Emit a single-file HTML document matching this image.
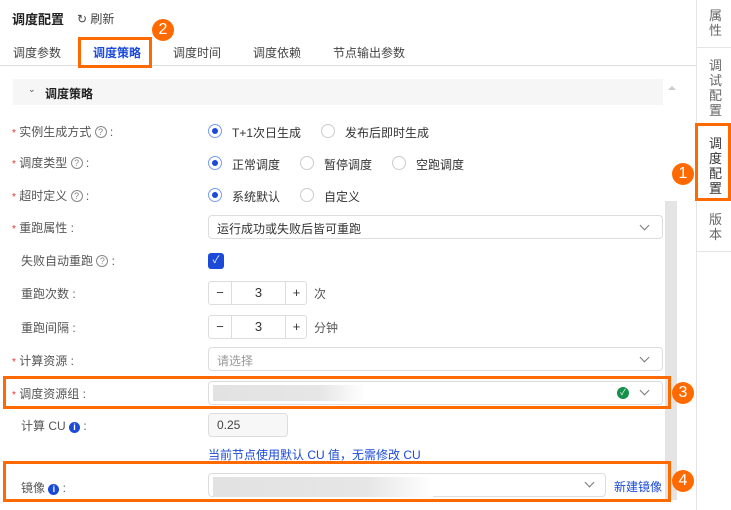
<!DOCTYPE html>
<html><head><meta charset="utf-8"><style>
*{box-sizing:border-box;margin:0;padding:0}
body{width:731px;height:510px;overflow:hidden;background:#fff;font-family:"Liberation Sans","Noto Sans CJK SC",sans-serif;font-size:12px;color:#333;position:relative}
.a{position:absolute;white-space:nowrap}
.lbl{color:#555}
.star{color:#e3342f;font-size:10px}
.radio{position:absolute;width:14px;height:14px;border:1px solid #ccc;border-radius:50%;background:#fff}
.radio.on{border-color:#7a9bf0}
.radio.on::after{content:"";position:absolute;left:3px;top:3px;width:6px;height:6px;border-radius:50%;background:#1b4ad8}
.sel{position:absolute;border:1px solid #ddd;border-radius:4px;background:#fff;height:24px}
.chev{position:absolute;width:7px;height:7px;border-right:1.5px solid #777;border-bottom:1.5px solid #777;transform:rotate(45deg)}
.ob{position:absolute;border:3px solid #ff6a00}
.num{position:absolute;width:22px;height:22px;border-radius:50%;background:#ff6a00;color:#fff;font-size:16px;text-align:center;line-height:22px}
.help{display:inline-block;width:12px;height:12px;border:1px solid #888;border-radius:50%;font-size:9px;line-height:10px;text-align:center;color:#888;vertical-align:1px}
.info{display:inline-block;width:11px;height:11px;border-radius:50%;background:#1b4ad8;color:#fff;font-size:9px;line-height:11px;text-align:center;font-weight:bold;vertical-align:0}
.step{position:absolute;width:99px;height:24px;border:1px solid #ddd;border-radius:3px}
.step span{position:absolute;top:0;height:22px;line-height:22px;text-align:center;font-size:13px;color:#333}
.grad{position:absolute;background:linear-gradient(90deg,#e2e2e2,#e6e6e6 70%,#fff)}
</style></head><body>
<div class="a" style="left:12px;top:9px;font-size:13px;font-weight:bold;color:#222">调度配置</div>
<div class="a" style="left:77px;top:10px;color:#444">&#8635; 刷新</div>
<div class="a" style="left:13px;top:44px;color:#444">调度参数</div>
<div class="a" style="left:93px;top:44px;color:#1b4ad8;font-weight:bold">调度策略</div>
<div class="a" style="left:173px;top:44px;color:#444">调度时间</div>
<div class="a" style="left:253px;top:44px;color:#444">调度依赖</div>
<div class="a" style="left:333px;top:44px;color:#444">节点输出参数</div>
<div class="a" style="left:0;top:65px;width:696px;height:1px;background:#ddd"></div>
<div class="ob" style="left:78px;top:37px;width:74px;height:31px"></div>
<div class="num" style="left:152px;top:19px">2</div>
<div class="a" style="left:13px;top:79px;width:650px;height:26px;background:#f6f6f6"></div>
<div class="a" style="left:28px;top:84px;font-size:9px;color:#555">&#8964;</div>
<div class="a" style="left:45px;top:85px;font-weight:bold;color:#222">调度策略</div>
<div class="a" style="left:668px;top:86px;width:0;height:0;border-left:4px solid transparent;border-right:4px solid transparent;border-bottom:4px solid #ccc"></div>
<div class="a" style="left:665px;top:201px;width:12px;height:299px;background:#e4e4e4"></div>

<div class="a lbl" style="left:12px;top:123px"><span class="star">*</span> 实例生成方式 <span class="help">?</span> :</div>
<div class="radio on" style="left:208px;top:124px"></div><div class="a" style="left:232px;top:124px">T+1次日生成</div>
<div class="radio" style="left:321px;top:124px"></div><div class="a" style="left:345px;top:124px">发布后即时生成</div>

<div class="a lbl" style="left:12px;top:154px"><span class="star">*</span> 调度类型 <span class="help">?</span> :</div>
<div class="radio on" style="left:208px;top:156px"></div><div class="a" style="left:232px;top:156px">正常调度</div>
<div class="radio" style="left:300px;top:156px"></div><div class="a" style="left:324px;top:156px">暂停调度</div>
<div class="radio" style="left:392px;top:156px"></div><div class="a" style="left:416px;top:156px">空跑调度</div>

<div class="a lbl" style="left:12px;top:187px"><span class="star">*</span> 超时定义 <span class="help">?</span> :</div>
<div class="radio on" style="left:208px;top:188px"></div><div class="a" style="left:232px;top:188px">系统默认</div>
<div class="radio" style="left:300px;top:188px"></div><div class="a" style="left:324px;top:188px">自定义</div>

<div class="a lbl" style="left:12px;top:219px"><span class="star">*</span> 重跑属性 :</div>
<div class="sel" style="left:208px;top:215px;width:455px"></div>
<div class="a" style="left:217px;top:220px">运行成功或失败后皆可重跑</div>
<div class="chev" style="left:641px;top:222px"></div>

<div class="a lbl" style="left:21px;top:252px">失败自动重跑 <span class="help">?</span> :</div>
<div class="a" style="left:208px;top:253px;width:16px;height:16px;border-radius:3px;background:#1b4ad8;color:#fff;font-size:10px;text-align:center;line-height:16px">&#10003;</div>

<div class="a lbl" style="left:21px;top:285px">重跑次数 :</div>
<div class="step" style="left:208px;top:281px"><span style="left:0;width:23px;border-right:1px solid #ddd">&minus;</span><span style="left:23px;width:53px">3</span><span style="left:76px;width:22px;border-left:1px solid #ddd">+</span></div>
<div class="a" style="left:314px;top:285px;color:#555">次</div>

<div class="a lbl" style="left:21px;top:319px">重跑间隔 :</div>
<div class="step" style="left:208px;top:315px"><span style="left:0;width:23px;border-right:1px solid #ddd">&minus;</span><span style="left:23px;width:53px">3</span><span style="left:76px;width:22px;border-left:1px solid #ddd">+</span></div>
<div class="a" style="left:314px;top:319px;color:#555">分钟</div>

<div class="a lbl" style="left:12px;top:352px"><span class="star">*</span> 计算资源 :</div>
<div class="sel" style="left:208px;top:347px;width:455px"></div>
<div class="a" style="left:217px;top:352px;color:#999">请选择</div>
<div class="chev" style="left:641px;top:354px"></div>

<div class="a lbl" style="left:12px;top:385px"><span class="star">*</span> 调度资源组 :</div>
<div class="sel" style="left:208px;top:381px;width:455px"></div>
<div class="grad" style="left:213px;top:385px;width:152px;height:16px"></div>
<div class="a" style="left:617px;top:387px;width:12px;height:12px;border-radius:50%;background:#14904a;color:#fff;font-size:8px;text-align:center;line-height:12px">&#10003;</div>
<div class="chev" style="left:641px;top:387px"></div>
<div class="ob" style="left:3px;top:376px;width:668px;height:33px"></div>
<div class="num" style="left:672px;top:382px">3</div>

<div class="a lbl" style="left:21px;top:417px">计算 CU <span class="info">i</span> :</div>
<div class="a" style="left:208px;top:413px;width:80px;height:24px;border:1px solid #ddd;border-radius:4px;background:#f7f7f7"></div>
<div class="a" style="left:217px;top:418px;color:#444">0.25</div>
<div class="a" style="left:208px;top:446px;color:#1b4ad8">当前节点使用默认 CU 值，无需修改 CU</div>

<div class="a lbl" style="left:21px;top:479px">镜像 <span class="info">i</span> :</div>
<div class="sel" style="left:208px;top:473px;width:398px"></div>
<div class="grad" style="left:213px;top:477px;width:220px;height:20px"></div>
<div class="chev" style="left:586px;top:479px"></div>
<div class="a" style="left:614px;top:478px;color:#1b4ad8">新建镜像</div>
<div class="ob" style="left:3px;top:461px;width:668px;height:41px"></div>
<div class="num" style="left:672px;top:470px">4</div>

<div class="a" style="left:696px;top:0;width:1px;height:510px;background:#e4e4e4"></div>
<div class="a" style="left:709px;top:8px;width:14px;line-height:15px;white-space:normal;font-size:13px;color:#666">属性</div>
<div class="a" style="left:697px;top:47px;width:34px;height:1px;background:#e4e4e4"></div>
<div class="a" style="left:709px;top:58px;width:14px;line-height:15px;white-space:normal;font-size:13px;color:#666">调试配置</div>
<div class="a" style="left:709px;top:136px;width:14px;line-height:15px;white-space:normal;font-size:13px;color:#333">调度配置</div>
<div class="ob" style="left:695px;top:123px;width:36px;height:78px"></div>
<div class="num" style="left:672px;top:163px">1</div>
<div class="a" style="left:709px;top:212px;width:14px;line-height:15px;white-space:normal;font-size:13px;color:#666">版本</div>
<div class="a" style="left:697px;top:251px;width:34px;height:1px;background:#e4e4e4"></div>
</body></html>
